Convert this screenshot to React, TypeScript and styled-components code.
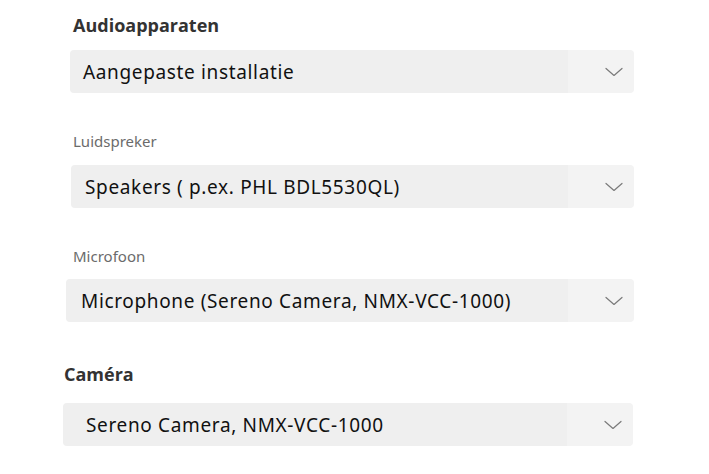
import { FC } from "react";
import styled, { createGlobalStyle } from "styled-components";

const GlobalStyle = createGlobalStyle`
  html, body {
    margin: 0;
    padding: 0;
    background: #ffffff;
  }
  body {
    font-family: "Noto Sans", "Open Sans", sans-serif;
  }
`;

const Page = styled.div`
  width: 709px;
  height: 474px;
  padding: 15px 0 0 0;
  box-sizing: border-box;
  display: flex;
  flex-direction: column;
`;

const Heading = styled.div<{ $top: number; $left: number }>`
  margin: ${(p) => p.$top}px 0 0 ${(p) => p.$left}px;
  font-family: "Open Sans", "Noto Sans", sans-serif;
  font-weight: 700;
  font-size: 18px;
  line-height: 20px;
  color: #333333;
`;

const Label = styled.div<{ $top: number }>`
  margin: ${(p) => p.$top}px 0 0 73px;
  font-family: "Noto Sans", sans-serif;
  font-size: 15px;
  line-height: 18px;
  color: #6b6b6b;
`;

const Select = styled.div<{ $top: number; $left: number; $right: number }>`
  margin: ${(p) => p.$top}px 0 0 ${(p) => p.$left}px;
  width: ${(p) => p.$right - p.$left}px;
  height: 43px;
  display: flex;
  border-radius: 4px;
  overflow: hidden;
`;

const Value = styled.div<{ $pad: number }>`
  flex: 1;
  display: flex;
  align-items: center;
  padding-left: ${(p) => p.$pad}px;
  background: #efefef;
  font-family: "Noto Sans", sans-serif;
  font-size: 19px;
  letter-spacing: 0.65px;
  color: #111111;
  white-space: nowrap;
`;

const Arrow = styled.div`
  width: 66px;
  display: flex;
  align-items: center;
  justify-content: flex-end;
  padding-right: 11px;
  box-sizing: border-box;
  background: #f3f3f3;
`;

type FieldProps = {
  value: string;
  top: number;
  left: number;
  right?: number;
  pad: number;
};

const Field: FC<FieldProps> = ({ value, top, left, right = 634, pad }) => (
  <Select $top={top} $left={left} $right={right}>
    <Value $pad={pad}>{value}</Value>
    <Arrow>
      <svg width="18" height="10" viewBox="0 0 18 10" fill="none">
        <path
          d="M1 1.5 L9 8.5 L17 1.5"
          stroke="#7a7a7a"
          strokeWidth="1.2"
          strokeLinecap="round"
          strokeLinejoin="round"
        />
      </svg>
    </Arrow>
  </Select>
);

export default function App() {
  return (
    <>
      <GlobalStyle />
      <Page>
        <Heading $top={0} $left={73}>
          Audioapparaten
        </Heading>
        <Field value="Aangepaste installatie" top={15} left={70} pad={13} />
        <Label $top={39}>Luidspreker</Label>
        <Field
          value="Speakers ( p.ex. PHL BDL5530QL)"
          top={15}
          left={71}
          pad={14}
        />
        <Label $top={39}>Microfoon</Label>
        <Field
          value="Microphone (Sereno Camera, NMX-VCC-1000)"
          top={14}
          left={66}
          pad={15}
        />
        <Heading $top={42} $left={64}>
          Caméra
        </Heading>
        <Field
          value="Sereno Camera, NMX-VCC-1000"
          top={19}
          left={63}
          right={633}
          pad={23}
        />
      </Page>
    </>
  );
}
